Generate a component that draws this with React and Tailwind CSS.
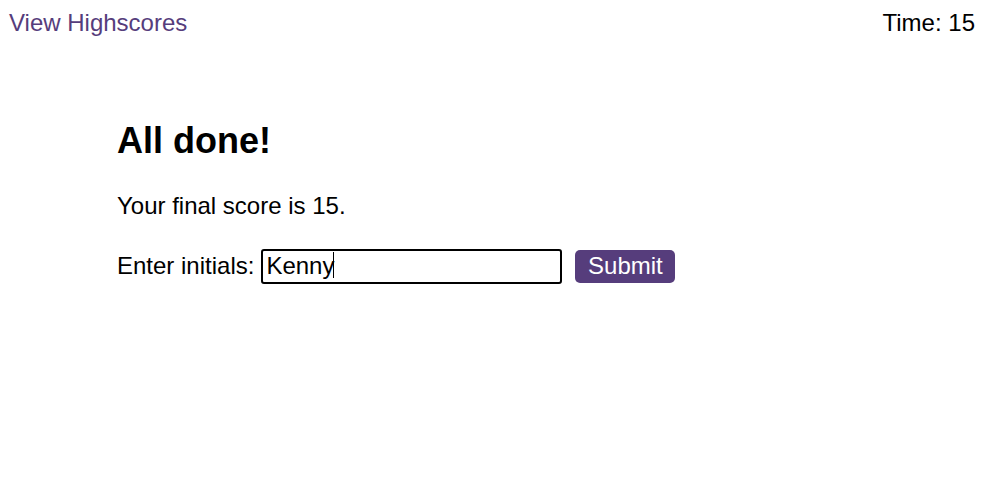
import React from 'react';

export default function App() {
  return (
    <div className="min-h-screen bg-white text-black font-['Liberation_Sans',Arial,sans-serif] text-[24px] leading-[1.15]">
      {/* Header */}
      <header className="flex justify-between items-start pl-[9px] pr-[10px] pt-[9px]">
        <a href="#" className="text-[#563d7c]">View Highscores</a>
        <span>Time: 15</span>
      </header>

      {/* Result */}
      <main className="pl-[117px] pt-[83px]">
        <h1 className="text-[36px] font-bold leading-[1.15]">All done!</h1>
        <p className="mt-[31px]">Your final score is 15.</p>
        <form className="mt-[29px] flex items-center" onSubmit={(e) => e.preventDefault()}>
          <label htmlFor="initials">Enter initials:</label>
          <div className="relative ml-[7px]">
            <input
              id="initials"
              type="text"
              defaultValue="Kenny"
              className="block w-[301px] h-[35px] border-2 border-black rounded-[3px] px-[3px] py-[2px] text-[24px] leading-[1.15] outline-none"
            />
            {/* text caret */}
            <span className="absolute left-[72px] top-[3px] w-px h-[26px] bg-black pointer-events-none" />
          </div>
          <button
            type="submit"
            className="ml-[13px] w-[100px] h-[33px] rounded-[5px] bg-[#563d7c] text-white text-[24px] leading-[1.15]"
          >
            Submit
          </button>
        </form>
      </main>
    </div>
  );
}
